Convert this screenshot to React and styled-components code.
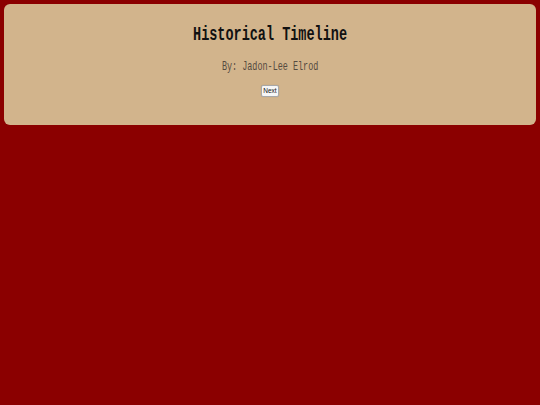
import React from "react";
import styled, { createGlobalStyle } from "styled-components";

const Global = createGlobalStyle`
  html, body { margin: 0; padding: 0; background: #8b0000; }
  body { width: 540px; height: 405px; overflow: hidden; }
`;

const Page = styled.div`
  padding: 4px;
  background: #8b0000;
  min-height: 405px;
  box-sizing: border-box;
`;

const Panel = styled.section`
  background: #d2b48c;
  border-radius: 6px;
  display: flex;
  flex-direction: column;
  align-items: center;
  padding: 19px 0 28px;
`;

const Title = styled.h1`
  margin: 0;
  height: 24px;
  line-height: 24px;
  font-family: "Liberation Mono", "Courier New", monospace;
  font-weight: bold;
  font-size: 20px;
  color: #111;
  transform: scaleX(0.675);
  white-space: nowrap;
`;

const Byline = styled.p`
  margin: 12px 0 0;
  height: 16px;
  line-height: 16px;
  font-family: "Liberation Mono", "Courier New", monospace;
  font-size: 13px;
  color: #554a40;
  transform: scaleX(0.65);
  white-space: nowrap;
`;

const Button = styled.button`
  margin-top: 10px;
  width: 18px;
  height: 12px;
  padding: 0;
  box-sizing: border-box;
  border: 1px solid #a8a8a8;
  border-radius: 2px;
  background: #f6f6f6;
  box-shadow: 0 0 1px rgba(0, 0, 0, 0.2);
  font-family: "Liberation Sans", Arial, sans-serif;
  font-size: 6.5px;
  line-height: 10px;
  color: #111;
  cursor: pointer;
`;

export default function App() {
  return (
    <>
      <Global />
      <Page>
        <Panel>
          <Title>Historical Timeline</Title>
          <Byline>By: Jadon-Lee Elrod</Byline>
          <Button>Next</Button>
        </Panel>
      </Page>
    </>
  );
}
